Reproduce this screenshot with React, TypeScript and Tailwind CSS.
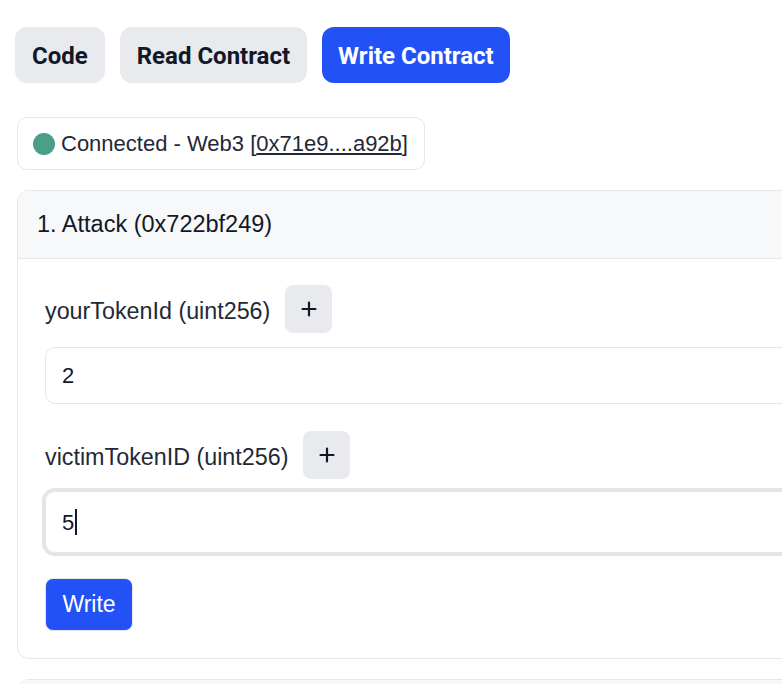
const sans = "font-['Liberation_Sans',Arial,sans-serif]";

const Plus = () => (
  <svg width="16" height="16" viewBox="0 0 16 16" fill="none">
    <path d="M8 1.5v13M1.5 8h13" stroke="#111827" strokeWidth="2.2" strokeLinecap="round" />
  </svg>
);

const Tab = ({ label, active }: { label: string; active?: boolean }) => (
  <button
    className={
      active
        ? "h-[56px] rounded-xl bg-[#2252f6] px-[16px] pt-[1px] text-[24px] font-bold text-white"
        : "h-[56px] rounded-xl bg-[#e9eaee] px-[17px] pt-[1px] text-[24px] font-bold text-[#111827]"
    }
  >
    {label}
  </button>
);

const ParamLabel = ({ name }: { name: string }) => (
  <div className="flex items-center gap-[15px]">
    <span className="pt-[4px] text-[23.3px] text-[#1f2937]">{name}</span>
    <button className="flex h-[48px] w-[47px] items-center justify-center rounded-lg bg-[#e9eaee]">
      <Plus />
    </button>
  </div>
);

export default function App() {
  return (
    <div className={`h-[684px] w-full overflow-hidden bg-white ${sans}`}>
      <div className="w-[1100px] pl-[15px] pt-[27px]">
        <div className="flex gap-[15px] font-['Roboto',sans-serif]">
          <Tab label="Code" />
          <Tab label="Read Contract" />
          <Tab label="Write Contract" active />
        </div>

        <div className="ml-[2px] mt-[34px] inline-flex h-[53px] items-center gap-[6px] rounded-[10px] border border-[#e5e7eb] pl-[15px] pr-[16px] text-[22px] text-[#1f2937]">
          <span className="h-[22px] w-[22px] rounded-full bg-[#4a9f86]" />
          <span>
            Connected - Web3 [<span className="underline underline-offset-2">0x71e9....a92b</span>]
          </span>
        </div>

        <div className="ml-[2px] mt-[20px] overflow-hidden rounded-xl border border-[#e5e7eb]">
          <div className="flex h-[68px] items-center border-b border-[#e5e7eb] bg-[#f7f8fa] px-[19px] text-[23.5px] text-[#111827]">
            1. Attack (0x722bf249)
          </div>
          <div className="flex flex-col pb-[27px] pl-[27px] pt-[26px]">
            <ParamLabel name="yourTokenId (uint256)" />
            <input
              readOnly
              value="2"
              className="mt-[14px] h-[57px] rounded-[10px] border border-[#e5e7eb] px-[16px] text-[22px] text-[#111827] outline-none"
            />
            <div className="mt-[27px]">
              <ParamLabel name="victimTokenID (uint256)" />
            </div>
            <div className="mt-[12px] flex h-[62px] items-center rounded-[10px] border border-[#e5e5e5] px-[16px] text-[22px] text-[#111827] shadow-[0_0_0_3px_#e5e5e5]">
              5<span className="ml-[1px] h-[26px] w-[2px] bg-[#111827]" />
            </div>
            <div className="mt-[25px]">
              <button className="h-[53px] w-[88px] rounded-lg border border-[#e5e7eb] bg-[#2252f6] text-[23px] text-white">
                Write
              </button>
            </div>
          </div>
        </div>

        <div className="ml-[2px] mt-[20px] overflow-hidden rounded-xl border border-[#e5e7eb]">
          <div className="h-[68px] border-b border-[#e5e7eb] bg-[#f7f8fa]" />
          <div className="h-[200px]" />
        </div>
      </div>
    </div>
  );
}
